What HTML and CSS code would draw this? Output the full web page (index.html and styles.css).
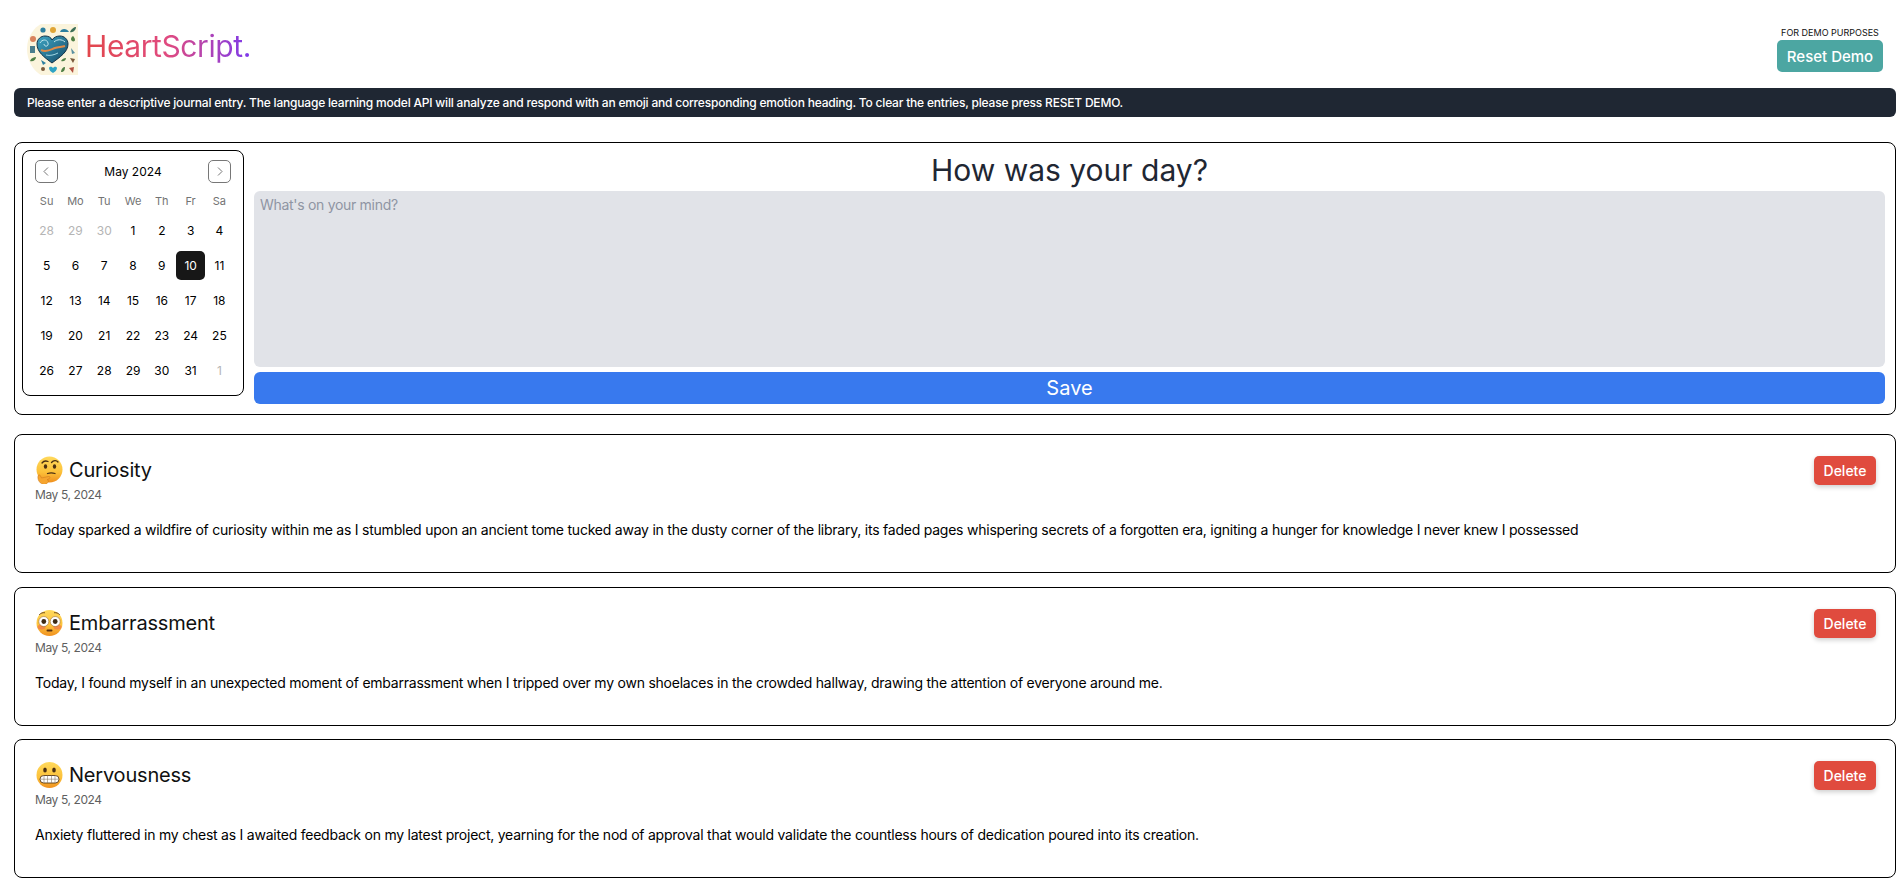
FILE: index.html
```html
<!DOCTYPE html>
<html lang="en">
<head>
<meta charset="UTF-8" />
<meta name="viewport" content="width=device-width, initial-scale=1" />
<title>HeartScript</title>
<link rel="stylesheet" href="styles.css">
</head>
<body>

<svg class="defs" width="0" height="0" aria-hidden="true">
  <defs>
    <linearGradient id="face" x1="0" y1="0" x2="0" y2="1">
      <stop offset="0" stop-color="#ffd95c" />
      <stop offset="0.6" stop-color="#fcc13a" />
      <stop offset="1" stop-color="#f0901f" />
    </linearGradient>
    <linearGradient id="heartFill" x1="0" y1="0" x2="1" y2="1">
      <stop offset="0" stop-color="#3fa6c4" />
      <stop offset="1" stop-color="#154a68" />
    </linearGradient>
  </defs>
</svg>

<header class="topbar">
  <div class="brand">
    <svg class="logo" viewBox="0 0 51 51" aria-hidden="true">
      <path d="M14 0H51V51H14C8 48 0 38 0 25S8 3 14 0Z" fill="#fbf4dc" />
      <g fill="#2c7f9f">
        <circle cx="16" cy="6" r="2.6" />
        <circle cx="26" cy="6" r="3" fill="#e0a536" />
        <path d="M33 8c1-4 7-4 9 0z" />
        <path d="M43 8c1-3 4-5 6-5 0 3-3 6-6 5z" fill="#3c6e57" />
        <circle cx="6" cy="15" r="3" fill="#d9825c" />
        <rect x="3" y="22" width="5" height="7" fill="#4a7d8c" />
        <path d="M3 37c1-3 4-4 6-4 0 3-3 5-6 4z" fill="#4f7f45" />
        <path d="M14 36l5 3-3 2z" />
        <circle cx="16" cy="45" r="2" fill="#7a5a3c" />
        <path d="M22 44c1-2 3-1 4 0 1-1 3-2 4 0 0 2-2 4-4 5-2-1-4-3-4-5z" fill="#2ea3c4" />
        <path d="M34 48c0-3 2-5 4-5 0 3-1 5-4 5z" fill="#4f7f45" />
        <path d="M42 44l5-1-1 6z" fill="#b0503f" />
        <path d="M44 15c0-2 2-3 2-3s2 2 2 4-4 2-4-1z" fill="#4f7f45" />
        <path d="M44 24l4 5-3 1z" fill="#5a8fa0" />
        <path d="M34 37c1-2 3-3 5-3 0 2-2 4-5 3z" fill="#4f7f45" />
        <path d="M43 34l5 1-2 4z" fill="#7a5a3c" />
      </g>
      <path d="M25 39C17 33 10 28 10 20c0-5 4-8 8-8 3 0 6 1 7 4 2-3 5-4 8-4 4 0 8 3 8 8 0 8-8 13-16 19z" fill="url(#heartFill)" stroke="#123247" stroke-width="1" />
      <path d="M14 26c6 3 11-1 14-2s7-1 10-2" fill="none" stroke="#e08a48" stroke-width="2" />
      <path d="M13 19c2-4 7-4 8 0s-4 4-4 1M27 18c3-3 8-3 11 0" fill="none" stroke="#bfe6ee" stroke-width="1" />
      <path d="M19 31c4 1 8 0 12-2" fill="none" stroke="#9fd5e2" stroke-width="1" />
    </svg>
    <h1 class="brand-name">HeartScript.</h1>
  </div>
  <div class="demo">
    <span class="demo-note">FOR DEMO PURPOSES</span>
    <button class="reset-btn">Reset Demo</button>
  </div>
</header>

<p class="banner">Please enter a descriptive journal entry. The language learning model API will analyze and respond with an emoji and corresponding emotion heading. To clear the entries, please press RESET DEMO.</p>

<section class="composer">
  <div class="calendar">
    <div class="cal-head">
      <button class="cal-nav" aria-label="Previous month">
        <svg viewBox="0 0 15 15" width="15" height="15"><path d="M9 3.500 5 7.500l4 4" fill="none" stroke="#777" stroke-width="1" /></svg>
      </button>
      <span class="cal-month">May 2024</span>
      <button class="cal-nav" aria-label="Next month">
        <svg viewBox="0 0 15 15" width="15" height="15"><path d="M6 3.500l4 4-4 4" fill="none" stroke="#777" stroke-width="1" /></svg>
      </button>
    </div>
    <div class="cal-grid">
      <span class="wd">Su</span><span class="wd">Mo</span><span class="wd">Tu</span><span class="wd">We</span><span class="wd">Th</span><span class="wd">Fr</span><span class="wd">Sa</span>
      <span class="day muted">28</span><span class="day muted">29</span><span class="day muted">30</span><span class="day">1</span><span class="day">2</span><span class="day">3</span><span class="day">4</span>
      <span class="day">5</span><span class="day">6</span><span class="day">7</span><span class="day">8</span><span class="day">9</span><span class="day today">10</span><span class="day">11</span>
      <span class="day">12</span><span class="day">13</span><span class="day">14</span><span class="day">15</span><span class="day">16</span><span class="day">17</span><span class="day">18</span>
      <span class="day">19</span><span class="day">20</span><span class="day">21</span><span class="day">22</span><span class="day">23</span><span class="day">24</span><span class="day">25</span>
      <span class="day">26</span><span class="day">27</span><span class="day">28</span><span class="day">29</span><span class="day">30</span><span class="day">31</span><span class="day muted">1</span>
    </div>
  </div>
  <div class="entry-form">
    <h2 class="prompt">How was your day?</h2>
    <textarea class="entry-input" placeholder="What's on your mind?"></textarea>
    <button class="save-btn">Save</button>
  </div>
</section>

<article class="entry">
  <div class="entry-top">
    <div>
      <h3 class="entry-title">
        <svg class="emoji" viewBox="0 0 28 28" aria-hidden="true">
          <circle cx="14" cy="13.500" r="13" fill="url(#face)" />
          <ellipse cx="10" cy="10.500" rx="1.700" ry="2.200" fill="#4a2f12" />
          <ellipse cx="19" cy="10.500" rx="1.700" ry="2.200" fill="#4a2f12" />
          <path d="M6.500 7c1.500-2 3.500-2.500 6-1.500M16 6.500c2-2.500 5-2.500 6.500-.5" fill="none" stroke="#4a2f12" stroke-width="1.300" stroke-linecap="round" />
          <path d="M12 17.500c2.500-.8 5-.8 7.500 0" fill="none" stroke="#4a2f12" stroke-width="1.300" stroke-linecap="round" />
          <path d="M5 27c-2-2-3-4-2.500-7 .2-1.500 2-1.500 2.500 0l1 2 7-1.500c1.500-.3 2 1.500.7 2.200l-2 1c1.500.5 1.500 2 .8 2.500-1 2-4 3.500-7.500.8z" fill="#f6a52f" stroke="#c9741a" stroke-width=".5" />
        </svg>
        Curiosity
      </h3>
      <p class="entry-date">May 5, 2024</p>
    </div>
    <button class="delete-btn">Delete</button>
  </div>
  <p class="entry-text">Today sparked a wildfire of curiosity within me as I stumbled upon an ancient tome tucked away in the dusty corner of the library, its faded pages whispering secrets of a forgotten era, igniting a hunger for knowledge I never knew I possessed</p>
</article>

<article class="entry">
  <div class="entry-top">
    <div>
      <h3 class="entry-title">
        <svg class="emoji" viewBox="0 0 28 28" aria-hidden="true">
          <circle cx="14" cy="14" r="13" fill="url(#face)" />
          <ellipse cx="6" cy="18" rx="4" ry="2.500" fill="#ee6a4e" opacity=".6" />
          <ellipse cx="22" cy="18" rx="4" ry="2.500" fill="#ee6a4e" opacity=".6" />
          <circle cx="8.300" cy="12.500" r="5" fill="#fff" stroke="#8a5a22" stroke-width=".5" />
          <circle cx="19.700" cy="12.500" r="5" fill="#fff" stroke="#8a5a22" stroke-width=".5" />
          <circle cx="8.300" cy="12.500" r="2.400" fill="#3d2a14" />
          <circle cx="19.700" cy="12.500" r="2.400" fill="#3d2a14" />
          <path d="M4 5.500c1.500-1.500 3-2 5-1.800M19 3.700c2-.2 3.500.3 5 1.800" fill="none" stroke="#6a4216" stroke-width="1" stroke-linecap="round" />
          <rect x="11" y="20.500" width="6" height="2" rx="1" fill="#5a3212" />
        </svg>
        Embarrassment
      </h3>
      <p class="entry-date">May 5, 2024</p>
    </div>
    <button class="delete-btn">Delete</button>
  </div>
  <p class="entry-text">Today, I found myself in an unexpected moment of embarrassment when I tripped over my own shoelaces in the crowded hallway, drawing the attention of everyone around me.</p>
</article>

<article class="entry">
  <div class="entry-top">
    <div>
      <h3 class="entry-title">
        <svg class="emoji" viewBox="0 0 28 28" aria-hidden="true">
          <circle cx="14" cy="14" r="13" fill="url(#face)" />
          <ellipse cx="9.500" cy="9" rx="1.800" ry="2.500" fill="#4a2f12" />
          <ellipse cx="18.500" cy="9" rx="1.800" ry="2.500" fill="#4a2f12" />
          <rect x="4.500" y="14.500" width="19" height="7.500" rx="3.700" fill="#fff" stroke="#5a3a16" stroke-width=".9" />
          <path d="M4.500 18.200h19M8.500 14.500v7.500M12 14.500v7.500M16 14.500v7.500M19.500 14.500v7.500" fill="none" stroke="#8a7a66" stroke-width=".6" />
        </svg>
        Nervousness
      </h3>
      <p class="entry-date">May 5, 2024</p>
    </div>
    <button class="delete-btn">Delete</button>
  </div>
  <p class="entry-text">Anxiety fluttered in my chest as I awaited feedback on my latest project, yearning for the nod of approval that would validate the countless hours of dedication poured into its creation.</p>
</article>

</body>
</html>
```

FILE: styles.css
```css
* {
  box-sizing: border-box;
}
body {
  margin: 0;
  padding: 0 8px 0 14px;
  font-family: Inter, "Noto Sans", sans-serif;
  background: white;
  color: black;
  overflow: hidden;
}
h1, h2, h3, p {
  margin: 0;
  font-weight: 400;
}
button {
  font-family: inherit;
  border: none;
  cursor: pointer;
}
.defs {
  position: absolute;
}
.topbar {
  display: flex;
  justify-content: space-between;
  height: 88px;
  padding: 24px 13px 0 13px;
}
.brand {
  display: flex;
  align-items: flex-start;
}
.logo {
  width: 51px;
  height: 51px;
}
.brand-name {
  margin: 2px 0 0 7px;
  font-size: 30px;
  line-height: 40px;
  letter-spacing: -0.4px;
  background: linear-gradient(90deg, #e2474a 0%, #e04a80 50%, #7c3aed 100%);
  -webkit-background-clip: text;
  background-clip: text;
  color: transparent;
}
.demo {
  display: flex;
  flex-direction: column;
  align-items: center;
  margin-top: 2px;
}
.demo-note {
  font-size: 9px;
  line-height: 14px;
  color: #111;
}
.reset-btn {
  width: 106px;
  height: 32px;
  background: #4ca6a2;
  color: white;
  font-size: 15px;
  font-weight: 500;
  border-radius: 5px;
}
.banner {
  height: 29px;
  padding: 0 13px;
  background: #1f2733;
  color: white;
  font-size: 12px;
  font-weight: 500;
  line-height: 29px;
  letter-spacing: -0.2px;
  border-radius: 6px;
}
.composer {
  display: flex;
  gap: 10px;
  height: 273px;
  margin-top: 25px;
  padding: 7px 10px 9px 7px;
  border: 1px solid black;
  border-radius: 8px;
}
.calendar {
  flex: none;
  width: 222px;
  height: 246px;
  padding: 9px 12px;
  border: 1px solid black;
  border-radius: 8px;
}
.cal-head {
  display: flex;
  align-items: center;
  justify-content: space-between;
}
.cal-nav {
  display: flex;
  align-items: center;
  justify-content: center;
  width: 23px;
  height: 23px;
  padding: 0;
  background: white;
  border: 1px solid #777;
  border-radius: 5px;
}
.cal-month {
  font-size: 12px;
}
.cal-grid {
  display: grid;
  grid-template-columns: repeat(7, 28.8px);
  grid-template-rows: 24px repeat(5, 35.2px);
  justify-content: center;
  margin-top: 5.5px;
}
.wd {
  display: flex;
  align-items: center;
  justify-content: center;
  font-size: 11px;
  color: #737373;
}
.day {
  display: flex;
  align-items: center;
  justify-content: center;
  height: 29px;
  font-size: 12px;
  border-radius: 5px;
  align-self: center;
}
.muted {
  color: #b5b5b5;
}
.today {
  background: #171717;
  color: white;
}
.entry-form {
  flex: 1;
  display: flex;
  flex-direction: column;
}
.prompt {
  height: 41px;
  font-size: 30px;
  line-height: 40px;
  text-align: center;
  color: #1f2733;
}
.entry-input {
  display: block;
  height: 176px;
  padding: 4px 6px;
  background: #e1e3e8;
  border: none;
  border-radius: 6px;
  font-family: inherit;
  font-size: 14px;
  line-height: 20px;
  letter-spacing: -0.3px;
  resize: none;
}
.entry-input::placeholder {
  color: #8f95a3;
}
.save-btn {
  height: 32px;
  margin-top: 5px;
  background: #3879ee;
  color: white;
  font-size: 20px;
  border-radius: 6px;
}
.entry {
  height: 139px;
  margin-top: 13.5px;
  padding: 21px 19px 0 20px;
  border: 1px solid black;
  border-radius: 8px;
}
.composer + .entry {
  margin-top: 19px;
}
.entry-top {
  display: flex;
  justify-content: space-between;
}
.entry-title {
  display: flex;
  align-items: center;
  gap: 5px;
  height: 28px;
  font-size: 20px;
  letter-spacing: -0.2px;
  color: #111;
}
.emoji {
  width: 29px;
  height: 28px;
}
.entry-date {
  margin-top: 3px;
  font-size: 12px;
  line-height: 16px;
  letter-spacing: -0.4px;
  color: #5f5f5f;
}
.delete-btn {
  width: 62px;
  height: 29px;
  background: #e04b3e;
  color: white;
  font-size: 14px;
  font-weight: 500;
  border-radius: 5px;
  box-shadow: 0 2px 5px rgba(0, 0, 0, 0.2);
}
.entry-text {
  margin-top: 17px;
  font-size: 14px;
  line-height: 20px;
  letter-spacing: -0.23px;
}
```
